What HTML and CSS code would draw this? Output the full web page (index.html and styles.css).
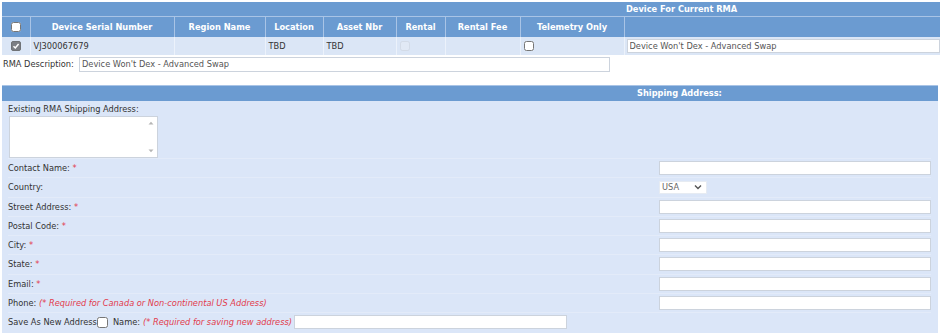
FILE: index.html
```html
<!DOCTYPE html>
<html>
<head>
<meta charset="utf-8">
<link rel="stylesheet" href="styles.css">
</head>
<body>
<div class="page">
  <table class="devices">
    <colgroup>
      <col style="width:28px"><col style="width:144px"><col style="width:91px"><col style="width:58px"><col style="width:73px"><col style="width:49px"><col style="width:75px"><col style="width:104px"><col>
    </colgroup>
    <thead>
      <tr class="title-row">
        <th colspan="8"></th>
        <th class="title">Device For Current RMA</th>
      </tr>
      <tr class="head-row">
        <th><input type="checkbox" class="cb"></th>
        <th>Device Serial Number</th>
        <th>Region Name</th>
        <th>Location</th>
        <th>Asset Nbr</th>
        <th>Rental</th>
        <th>Rental Fee</th>
        <th>Telemetry Only</th>
        <th></th>
      </tr>
    </thead>
    <tbody>
      <tr class="data-row">
        <td class="c"><span class="cb-checked"><svg width="8" height="8" viewBox="0 0 8 8"><path d="M1.5 4.2 L3.3 6 L6.6 2" fill="none" stroke="#ffffff" stroke-width="1.5"/></svg></span></td>
        <td>VJ300067679</td>
        <td></td>
        <td>TBD</td>
        <td>TBD</td>
        <td class="c-left"><input type="checkbox" class="cb faint" disabled></td>
        <td></td>
        <td class="c-left"><input type="checkbox" class="cb"></td>
        <td class="inp-cell"><input type="text" class="txt wide" value="Device Won't Dex - Advanced Swap"></td>
      </tr>
    </tbody>
  </table>

  <div class="desc-row">
    <label>RMA Description:</label>
    <input type="text" class="txt desc" value="Device Won't Dex - Advanced Swap">
  </div>

  <div class="ship">
    <div class="ship-head">Shipping Address:</div>
    <div class="ship-body">
      <div class="existing">
        <div class="lbl">Existing RMA Shipping Address:</div>
        <div class="ta-wrap">
          <textarea class="ta"></textarea>
          <svg class="sb-up" width="6" height="4" viewBox="0 0 6 4"><path d="M0.5 3.5 L3 0.8 L5.5 3.5 Z" fill="#b5b5b5"/></svg>
          <svg class="sb-down" width="6" height="4" viewBox="0 0 6 4"><path d="M0.5 0.5 L3 3.2 L5.5 0.5 Z" fill="#b5b5b5"/></svg>
        </div>
      </div>
      <div class="row"><span>Contact Name: <em class="req">*</em></span><input type="text" class="txt field"></div>
      <div class="row"><span>Country:</span>
        <div class="sel-wrap">
          <select class="sel"><option>USA</option></select>
          <svg class="chev" width="8" height="6" viewBox="0 0 8 6"><path d="M1 1.5 L4 4.5 L7 1.5" fill="none" stroke="#555" stroke-width="1.4"/></svg>
        </div>
      </div>
      <div class="row"><span>Street Address: <em class="req">*</em></span><input type="text" class="txt field"></div>
      <div class="row"><span>Postal Code: <em class="req">*</em></span><input type="text" class="txt field"></div>
      <div class="row"><span>City: <em class="req">*</em></span><input type="text" class="txt field"></div>
      <div class="row"><span>State: <em class="req">*</em></span><input type="text" class="txt field"></div>
      <div class="row"><span>Email: <em class="req">*</em></span><input type="text" class="txt field"></div>
      <div class="row"><span>Phone: <em class="note">(* Required for Canada or Non-continental US Address)</em></span><input type="text" class="txt field"></div>
      <div class="row save">
        <span class="save-grp">Save As New Address<input type="checkbox" class="cb save-cb"><span class="nm">Name:</span> <em class="note">(* Required for saving new address)</em><input type="text" class="txt name-in"></span>
      </div>
    </div>
  </div>
</div>
</body>
</html>
```

FILE: styles.css
```css
html, body {
  margin: 0;
  padding: 0;
  background: #ffffff;
}
body {
  font-family: "DejaVu Sans", Verdana, sans-serif;
  font-size: 8.25px;
  color: #333333;
}
.page {
  padding: 2px 0 0 2px;
}
.devices {
  width: 938px;
  border-collapse: collapse;
  table-layout: fixed;
}
.devices th {
  background: #6b9bd1;
  color: #ffffff;
  font-weight: bold;
  font-size: 8.25px;
  padding: 0;
}
.title-row th {
  height: 14px;
  border-bottom: 1px solid #a9c4e6;
}
.title-row .title {
  text-align: left;
  padding-left: 2px;
  border-left: none;
}
.head-row th {
  height: 20px;
  border-left: 1px solid #a9c4e6;
  text-align: center;
}
.head-row th:first-child {
  border-left: none;
}
.data-row td {
  background: #dbe6f6;
  height: 18px;
  padding: 0 0 0 3px;
  border-left: 1px solid #ecf2fb;
  white-space: nowrap;
  overflow: hidden;
}
.data-row td:first-child {
  border-left: none;
}
.data-row td.c {
  text-align: center;
  padding: 0;
}
.data-row td.inp-cell {
  padding: 0 0 0 2px;
}
.cb {
  width: 10px;
  height: 10px;
  margin: 0;
  vertical-align: middle;
}
.cb.faint {
  opacity: 0.35;
}
.cb-checked {
  display: inline-flex;
  align-items: center;
  justify-content: center;
  box-sizing: border-box;
  width: 10px;
  height: 10px;
  background: #7c7f85;
  border: 1px solid #6f7276;
  border-radius: 2px;
  vertical-align: middle;
}
.txt {
  box-sizing: border-box;
  border: 1px solid #ccd3dd;
  background: #ffffff;
  font-family: "DejaVu Sans", Verdana, sans-serif;
  font-size: 8.25px;
  color: #555555;
  padding: 0 2px;
  margin: 0;
  height: 14px;
  outline: none;
}
.txt.wide {
  width: 100%;
  display: block;
}
.desc-row {
  display: flex;
  align-items: center;
  height: 16px;
  padding-left: 1px;
  margin-top: 1px;
}
.desc-row label {
  width: 76px;
}
.txt.desc {
  width: 531px;
  height: 15px;
}
.ship {
  margin-top: 13px;
  width: 936px;
}
.ship-head {
  background: #6b9bd1;
  color: #ffffff;
  font-weight: bold;
  height: 15px;
  line-height: 15px;
  padding-left: 635px;
  border-top: 1px solid #a9c4e6;
}
.ship-body {
  background: #dbe6f8;
  padding: 2px 7px 6px 6px;
}
.existing {
  display: flex;
  flex-direction: column;
  gap: 1px;
}
.lbl {
  line-height: 12px;
  height: 12px;
}
.ta-wrap {
  position: relative;
  width: 149px;
  height: 42px;
  margin-left: 1px;
}
.ta {
  box-sizing: border-box;
  width: 149px;
  height: 42px;
  margin: 0;
  display: block;
  border: 1px solid #ccd3dd;
  background: #ffffff;
  resize: none;
  font-size: 8px;
}
.sb-up {
  position: absolute;
  right: 4px;
  top: 5px;
}
.sb-down {
  position: absolute;
  right: 4px;
  bottom: 5px;
}
.row {
  display: grid;
  grid-template-columns: 1fr 272px;
  align-items: center;
  height: 19.25px;
  border-top: 1px solid #e3ebf9;
  box-sizing: border-box;
}
.row:first-of-type {
  border-top: none;
}
.req {
  color: #e23a4c;
  font-style: normal;
}
.note {
  color: #e23a4c;
  font-style: italic;
}
.txt.field {
  width: 272px;
}
.sel-wrap {
  position: relative;
  width: 48px;
  height: 13px;
}
.sel {
  appearance: none;
  -webkit-appearance: none;
  box-sizing: border-box;
  width: 48px;
  height: 13px;
  border: 1px solid #e6ebf2;
  background: #ffffff;
  font-family: "DejaVu Sans", Verdana, sans-serif;
  font-size: 8.25px;
  color: #666666;
  padding: 0 2px;
  margin: 0;
  display: block;
}
.chev {
  position: absolute;
  right: 5px;
  top: 3px;
  pointer-events: none;
}
.row.save {
  grid-template-columns: 1fr;
}
.save-grp {
  display: flex;
  align-items: center;
}
.save-cb {
  width: 11px;
  height: 11px;
  margin: 0 5px 0 0;
}
.nm {
  margin-right: 3px;
}
.txt.name-in {
  width: 273px;
  margin-left: 2px;
}
```
